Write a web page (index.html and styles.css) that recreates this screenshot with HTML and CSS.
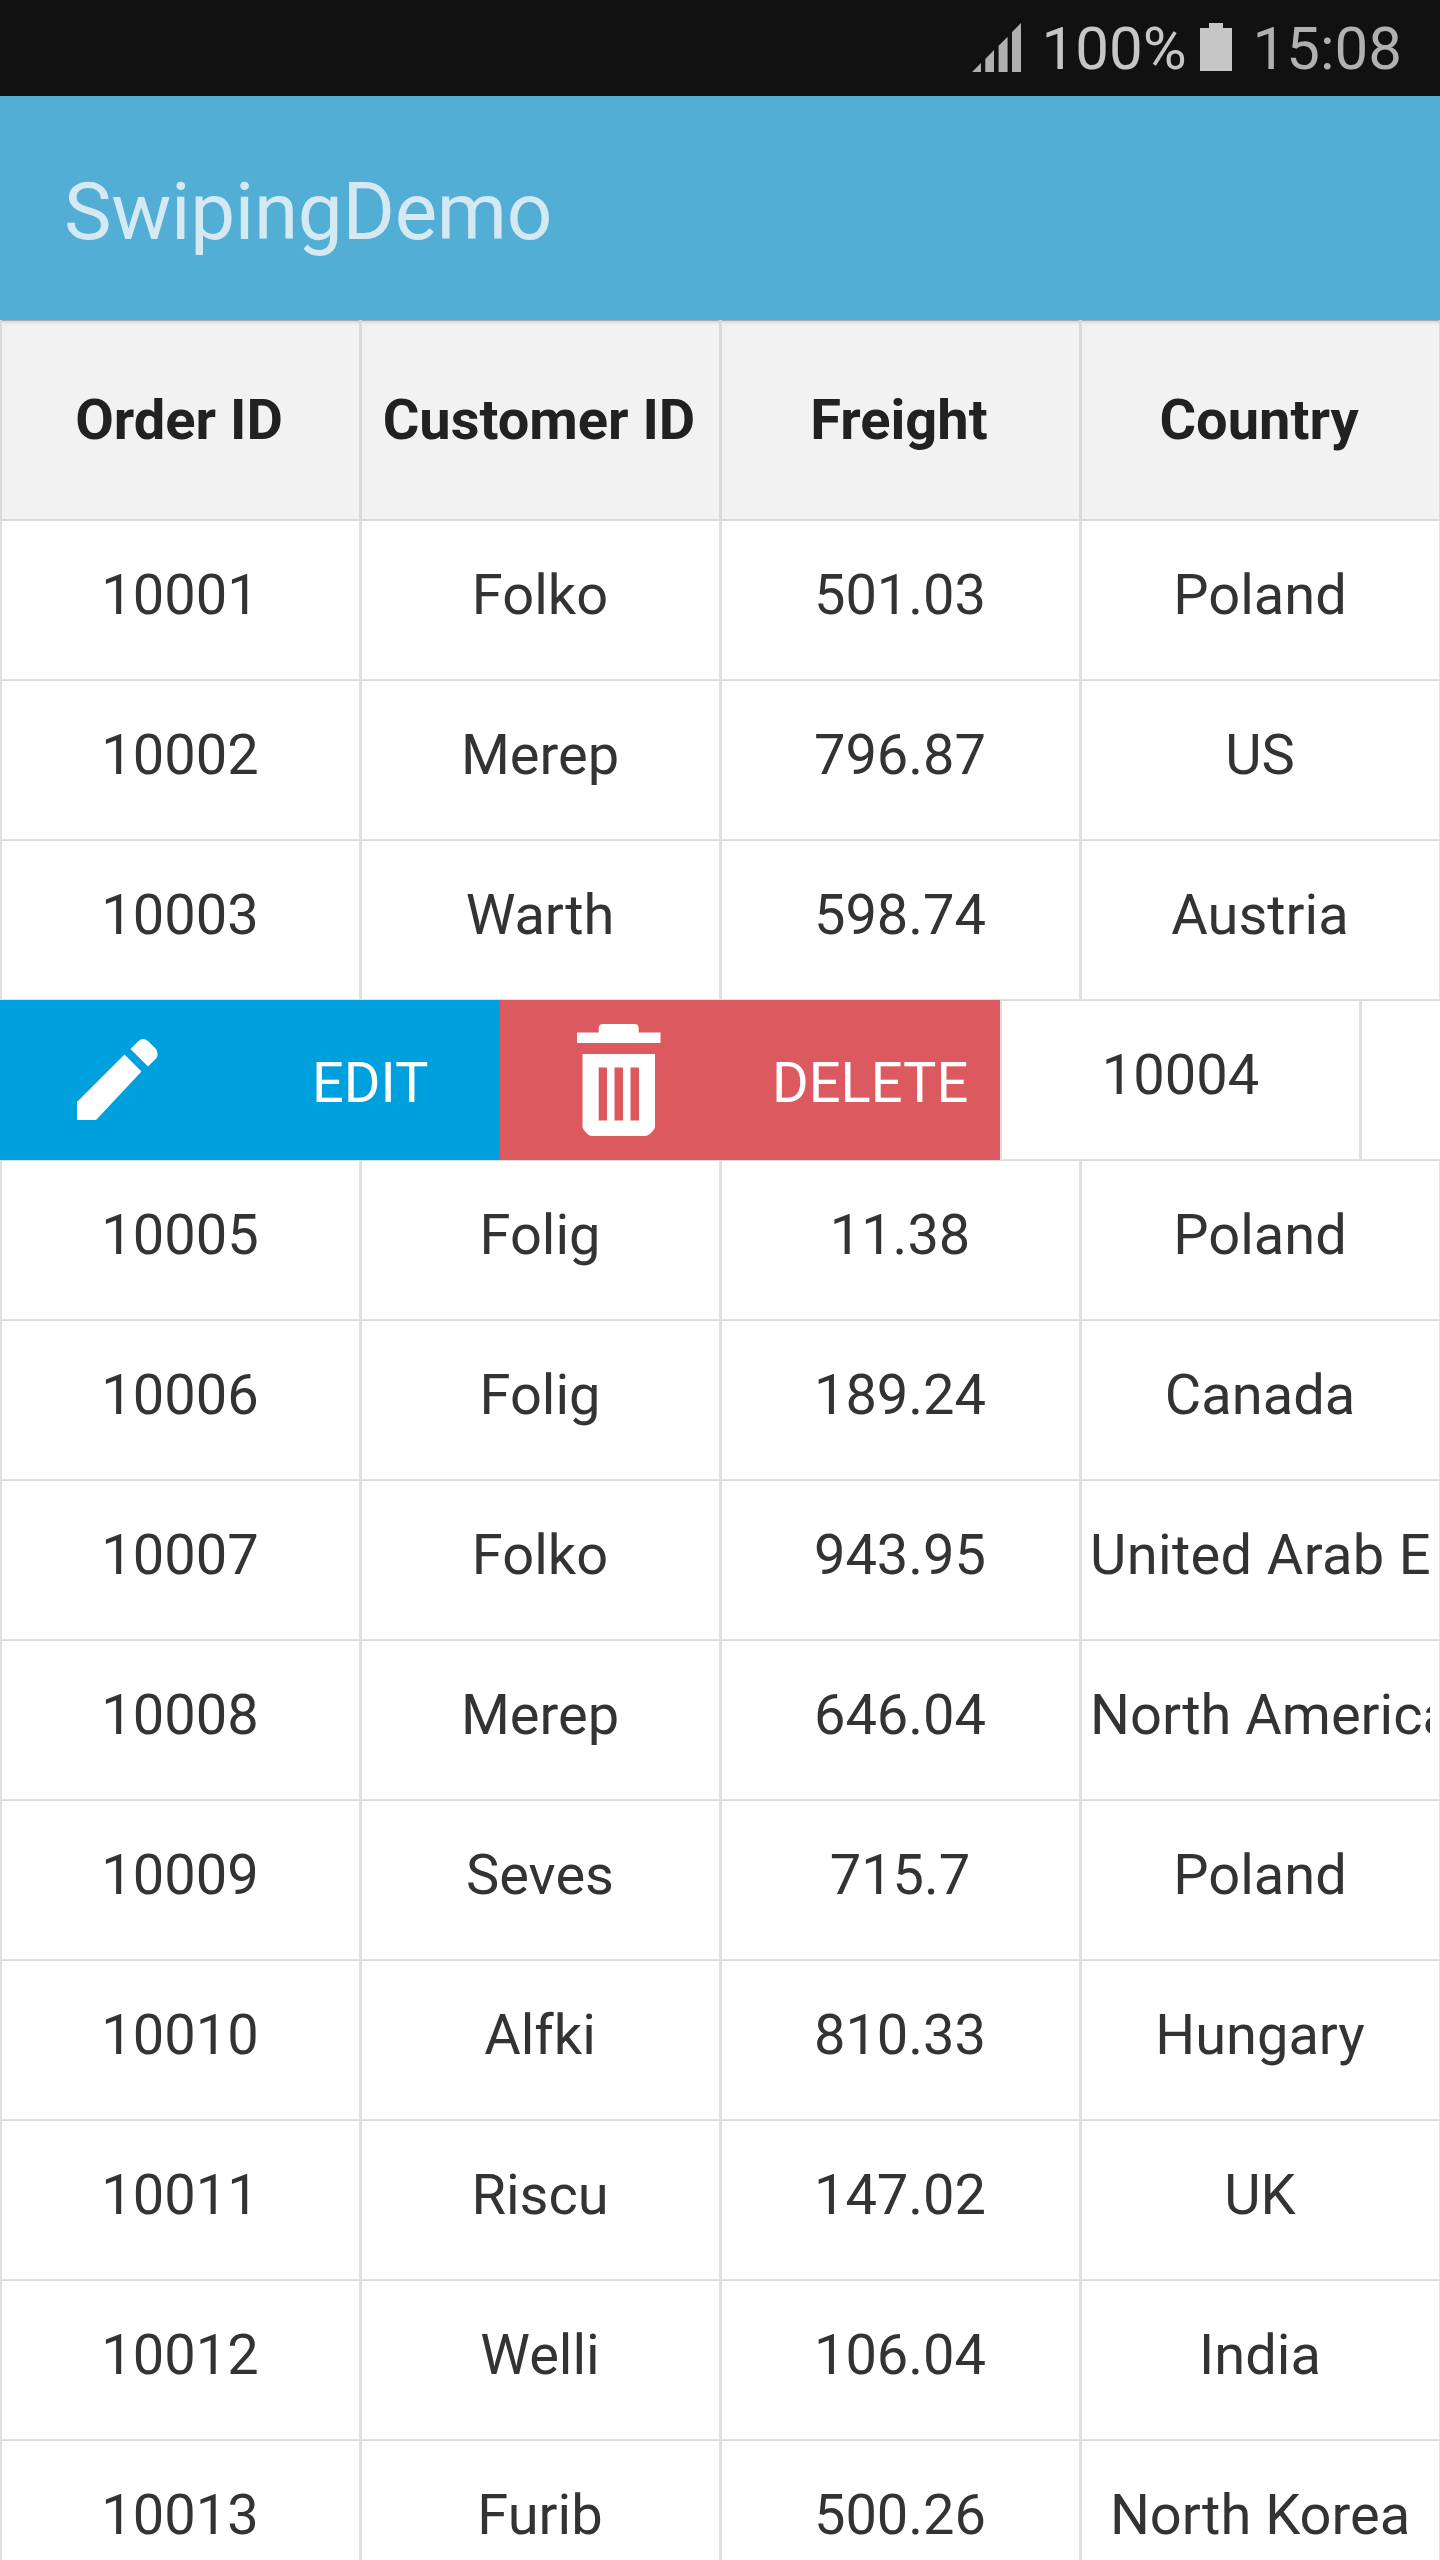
FILE: index.html
```html
<!DOCTYPE html>
<html lang="en">
<head>
<meta charset="utf-8">
<title>SwipingDemo</title>
<link rel="stylesheet" href="styles.css">
</head>
<body>
<div class="screen">
  <div class="status">
    <svg class="signal" width="50" height="50" viewBox="0 0 50 50"><path d="M0 49L9 40V49ZM13.300 36L22 27V49H13.300ZM26.600 22.700L35.600 13.700V49H26.600ZM40 9L49 0V49H40Z" fill="#b0b0b0"/></svg>
    <span class="percent">100%</span>
    <svg class="battery" width="32" height="48" viewBox="0 0 32 48"><path d="M9 0H23V5H32V48H0V5H9Z" fill="#c6c6c6"/></svg>
    <span class="clock">15:08</span>
  </div>
  <header class="appbar"><h1 class="title">SwipingDemo</h1></header>
  <main class="grid">
    <div class="row head"><div class="cell">Order ID</div><div class="cell">Customer ID</div><div class="cell">Freight</div><div class="cell">Country</div></div>
    <div class="row"><div class="cell">10001</div><div class="cell">Folko</div><div class="cell">501.03</div><div class="cell">Poland</div></div>
    <div class="row"><div class="cell">10002</div><div class="cell">Merep</div><div class="cell">796.87</div><div class="cell">US</div></div>
    <div class="row"><div class="cell">10003</div><div class="cell">Warth</div><div class="cell">598.74</div><div class="cell">Austria</div></div>
    <div class="row swiped">
      <div class="action edit">
        <svg class="icon" width="81" height="82" viewBox="0 0 81 82"><path d="M0 63L47.500 15.500L64.500 32.500L19 81H0ZM53.500 10L61.500 2Q66 -2 71 2L79 10Q82 14.500 79.500 19L71 27.500Z" fill="#fff"/></svg>
        <span class="label">EDIT</span>
      </div>
      <div class="action delete">
        <svg class="icon" width="84" height="113" viewBox="0 0 84 113"><path fill-rule="evenodd" d="M0 8.500H21.700V4Q22 0 26 0H58Q61.500 0 61.700 4V8.500H83.500V19H0ZM5.500 30H78V103Q78 105 75 108Q71 112 68 112H15Q12 112 8.500 108Q5.500 105 5.500 103ZM21.700 43.500V96.500H30V43.500ZM37.500 43.500V96.500H46V43.500ZM53.500 43.500V96.500H62V43.500Z" fill="#fff"/></svg>
        <span class="label">DELETE</span>
      </div>
      <div class="cell">10004</div><div class="cell"></div>
    </div>
    <div class="row"><div class="cell">10005</div><div class="cell">Folig</div><div class="cell">11.38</div><div class="cell">Poland</div></div>
    <div class="row"><div class="cell">10006</div><div class="cell">Folig</div><div class="cell">189.24</div><div class="cell">Canada</div></div>
    <div class="row"><div class="cell">10007</div><div class="cell">Folko</div><div class="cell">943.95</div><div class="cell long"><span class="clip spaced">United Arab E</span></div></div>
    <div class="row"><div class="cell">10008</div><div class="cell">Merep</div><div class="cell">646.04</div><div class="cell long"><span class="clip">North America</span></div></div>
    <div class="row"><div class="cell">10009</div><div class="cell">Seves</div><div class="cell">715.7</div><div class="cell">Poland</div></div>
    <div class="row"><div class="cell">10010</div><div class="cell">Alfki</div><div class="cell">810.33</div><div class="cell">Hungary</div></div>
    <div class="row"><div class="cell">10011</div><div class="cell">Riscu</div><div class="cell">147.02</div><div class="cell">UK</div></div>
    <div class="row"><div class="cell">10012</div><div class="cell">Welli</div><div class="cell">106.04</div><div class="cell">India</div></div>
    <div class="row"><div class="cell">10013</div><div class="cell">Furib</div><div class="cell">500.26</div><div class="cell">North Korea</div></div>
  </main>
</div>
</body>
</html>
```
FILE: styles.css
```css
* { box-sizing: border-box; }
body { margin: 0; font-family: Roboto, sans-serif; }
.screen { width: 1440px; height: 2560px; overflow: hidden; display: flex; flex-direction: column; background: #fff; }
.status { height: 96px; flex: none; background: #111; display: flex; align-items: flex-start; padding: 22px 38px 0 0; justify-content: flex-end; font-size: 60px; line-height: 54px; }
.signal { margin-top: 1px; }
.percent { color: #c6c6c6; margin-left: 19px; }
.clock { color: #b0b0b0; margin-left: 21px; }
.battery { margin: 1px 0 0 13px; }
.appbar { height: 224px; flex: none; background: #52aed5; display: flex; align-items: center; padding: 7px 0 0 64px; }
.title { margin: 0; font-size: 80px; line-height: 94px; font-weight: 400; letter-spacing: -0.3px; color: #d5e9f3; }
.grid { flex: none; }
.row { display: grid; grid-template-columns: repeat(4, 360px); height: 160px; }
.cell { display: flex; align-items: center; justify-content: center; padding: 0 1px 10px 0; border: 1px solid #e2e2e2; border-left: 2px solid #dfdfdf; border-top-color: #dadada; font-size: 56px; line-height: 66px; color: #333; white-space: nowrap; overflow: hidden; }
.head { height: 200px; background: linear-gradient(#a9a9a9 0 1px, #d9d9d9 1px, #f2f2f2 5px); }
.head .cell { font-weight: 700; color: #212121; padding: 1px 3px 0 0; border-top: 0; border-color: #dadada; }
.long { justify-content: flex-start; padding: 0 9px 10px 8px; }
.clip { overflow: hidden; }
.spaced { letter-spacing: 0.35px; }
.swiped { grid-template-columns: 500px 500px 360px 360px; overflow: hidden; }
.swiped .cell { padding-right: 0; }
.action { display: flex; align-items: center; color: #fff; font-size: 56px; line-height: 66px; }
.edit { background: #009fdd; padding-left: 77px; }
.delete { background: #dc595f; padding-left: 77px; }
.label { padding-top: 6px; }
.edit .label { margin-left: 154px; }
.delete .label { margin-left: 111px; }
```
